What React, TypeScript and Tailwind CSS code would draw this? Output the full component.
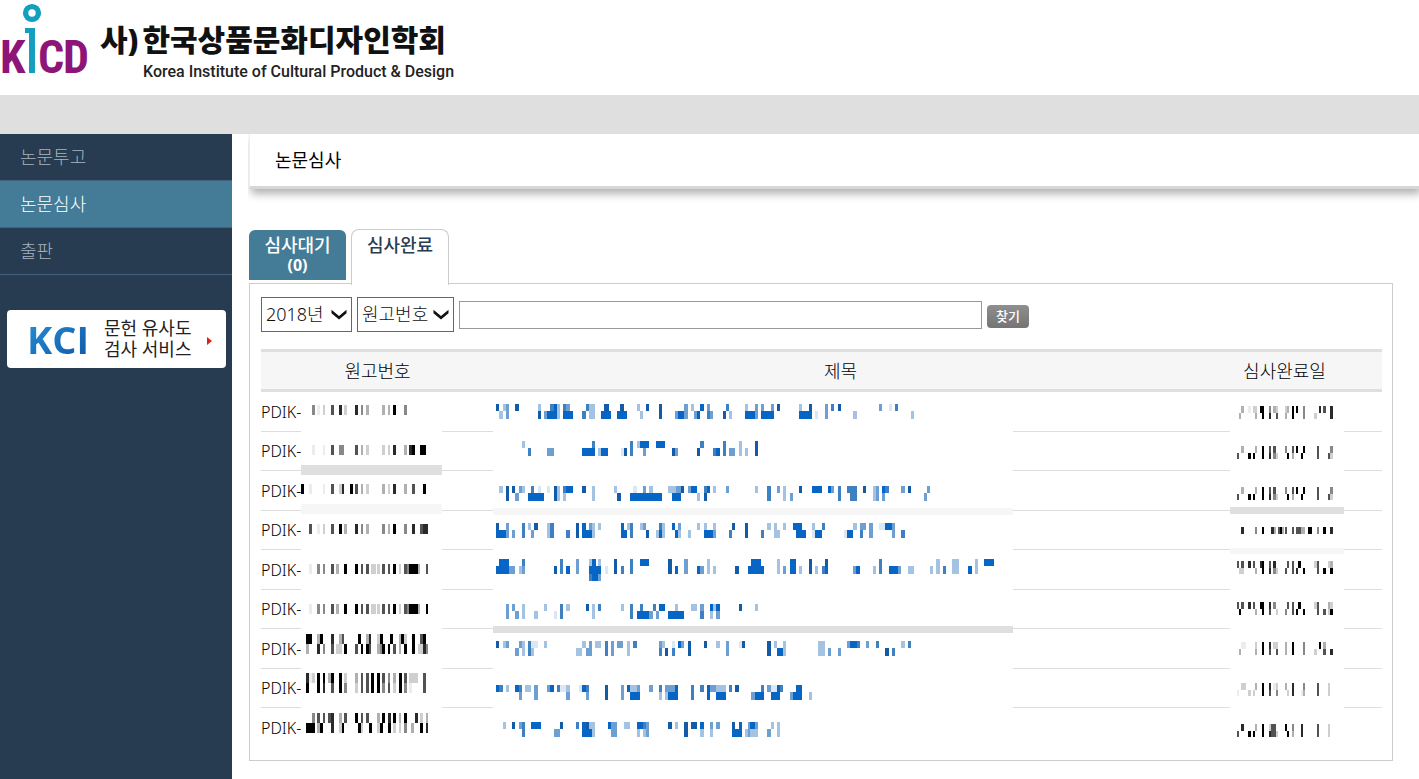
import React, { useState } from "react";

const BLUES: Record<string, string> = {
  a: "#135ba6",
  b: "#0765c6",
  c: "#3f80c0",
  d: "#6d9fd3",
  e: "#a4c2e2",
  f: "#dbe7f3",
};

const GRAYS: Record<string, string> = {
  k: "#000000",
  j: "#2a2a2a",
  h: "#525252",
  g: "#888888",
  m: "#b0b0b0",
  l: "#cfcfcf",
  w: "#ececec",
};

const MENU = ["논문투고", "논문심사", "출판"];

// Mosaic strings: "x.width.tones", one tone letter per line of blocks, "-" leaves the block empty.
// Three units make one pixel.
interface Mosaic {
  y: number;
  blocks: string;
  band?: { y: number; h: number; fill: string };
}

interface Paper {
  number: Mosaic;
  title: Mosaic;
  date: Mosaic;
}

const PAPERS: Paper[] = [
  {
    number: {
      y: 39,
      blocks: "171.9.g 186.9.w 204.6.l 228.9.h 252.9.j 267.9.l 300.9.j 318.6.g 333.9.m 381.9.m 399.6.m 414.9.k 447.9.g",
    },
    title: {
      y: 36,
      blocks:
        "33.9.a- 42.12.-e 54.9.e- 63.9.dd 90.12.a- 159.9.ea 177.9.-d 186.9.-b 195.12.cb 207.9.bb 216.9.ee 234.9.cb 243.12.db 255.9.-b 291.12.-c 303.9.c- 312.18.ee 348.9.-b 357.15.ab 372.6.-b 396.9.-b 405.12.ab 417.9.-b 456.9.e- 465.9.-e 483.9.a- 522.9.aa 570.9.-d 579.18.-b 597.12.dd 618.9.e- 627.9.-d 636.9.-b 645.12.b- 666.9.dc 675.9.-d 714.9.-a 723.9.c- 732.9.-e 780.9.eb 789.6.-b 795.15.-b 810.9.dd 828.9.db 837.21.-b 858.9.db 876.9.a- 942.9.eb 951.21.-b 972.9.ab 990.9.-f 1020.9.dd 1038.9.c- 1059.9.a- 1104.12.-e 1182.9.d- 1212.9.f- 1230.9.c- 1278.9.-e",
    },
    date: {
      y: 42,
      blocks:
        "117.6.-m 123.9.m- 144.9.w- 159.6.l- 165.6.lm 180.6.k- 186.6.kk 207.6.gj 219.9.m- 228.6.lh 255.6.lm 261.6.m- 276.6.kk 288.6.k- 309.6.gg 342.9.-l 357.6.j- 369.9.h- 390.9.jj",
    },
  },
  {
    number: {
      y: 39,
      blocks: "171.9.w 204.6.w 228.9.h 252.15.g 300.9.h 318.6.m 333.9.l 381.9.l 399.6.l 414.9.j 447.9.m 462.9.j 471.9.k 495.18.k",
    },
    title: {
      y: 27,
      blocks:
        "111.9.e- 129.9.-c 186.21.-d 291.30.-b 321.9.cb 339.9.-e 348.21.-b 408.9.-f 417.9.-a 435.9.cc 456.9.e- 465.9.b- 474.9.bd 483.9.b- 513.27.b- 561.9.-a 570.9.-d 636.9.-a 645.12.c- 684.9.-c 693.12.-b 714.9.cc 732.18.-d 762.9.ee 780.9.-e 810.9.aa",
    },
    date: {
      y: 42,
      blocks:
        "111.6.-h 123.9.m- 144.9.-k 159.6.-k 165.6.m- 186.6.kk 207.6.hj 219.9.hg 228.6.-l 255.6.g- 261.6.-k 276.6.hm 288.6.k- 303.6.-k 309.6.k- 351.6.hh 384.6.-h 390.9.gl",
    },
  },
  {
    number: {
      y: 39,
      blocks:
        "138.9.k 162.9.w 204.6.w 228.9.h 252.9.l 261.6.j 285.9.k 300.9.h 318.6.m 333.9.l 381.9.m 399.6.l 414.9.j 447.9.m 471.9.h 504.9.k",
      band: { y: -18, h: 30, fill: "#dfdfdf" },
    },
    title: {
      y: 45,
      blocks:
        "42.12.e- 63.9.aa 81.9.a- 90.12.-d 102.9.d- 111.9.e- 129.9.-b 138.9.cb 147.12.-b 159.9.fb 168.9.-b 186.9.f- 207.9.aa 216.9.ee 234.9.ce 243.21.b- 291.12.a- 321.9.ee 387.9.e- 396.12.-a 435.9.-b 444.12.fb 456.18.-b 474.9.db 483.9.-b 492.12.eb 504.27.-b 549.12.e- 561.12.eb 573.15.db 588.9.a- 609.9.d- 618.18.b- 636.9.-e 657.9.ca 666.9.b- 684.9.e- 723.9.d- 810.9.e- 846.12.cc 876.9.d- 894.9.ee 915.9.-d 942.9.a- 981.30.b- 1029.9.b- 1038.9.d- 1059.9.cc 1086.9.c- 1095.21.cc 1134.9.a- 1164.9.ee 1173.9.dd 1191.9.bd 1200.12.c- 1248.12.d- 1269.9.a- 1317.9.-d 1326.9.d-",
    },
    date: {
      y: 48,
      blocks:
        "111.6.-h 123.9.m- 144.9.-k 159.6.-k 165.6.m- 186.6.kk 207.6.hj 219.9.hg 228.6.-l 255.6.g- 261.6.-k 276.6.hm 288.6.k- 303.6.-k 309.6.k- 351.6.hh 384.6.-h 390.9.gl",
    },
  },
  {
    number: {
      y: 39,
      blocks:
        "162.9.h 186.9.w 204.6.l 228.9.h 252.9.k 267.9.m 300.9.j 318.6.g 333.9.m 381.9.g 399.6.m 414.9.k 447.9.g 471.9.j 495.9.h 504.15.j",
      band: { y: -21, h: 30, fill: "#f6f6f6" },
    },
    title: {
      y: 36,
      blocks:
        "33.9.ab 42.21.-b 63.9.dd 81.9.-d 111.9.cc 129.9.e- 138.9.-d 147.12.a- 186.9.ee 195.12.cc 243.12.-c 273.9.aa 291.12.bb 303.9.-b 312.9.db 321.9.ee 339.9.e- 408.9.bb 417.9.-b 426.9.e- 435.9.cc 465.9.e- 474.9.d- 483.9.-a 513.9.-e 522.9.cb 531.9.ee 561.9.b- 570.9.-b 579.9.de 609.9.-e 636.9.e- 657.9.eb 666.18.-b 684.9.ed 732.9.-c 741.9.a- 780.9.aa 828.9.-c 846.12.e- 867.9.ee 876.9.-e 894.9.e- 924.9.b- 933.18.bb 951.12.-b 981.9.ef 990.21.-b 1011.9.c- 1077.9.-f 1086.18.-b 1104.12.e- 1125.9.dc 1134.9.d- 1152.12.dd 1182.18.f- 1200.21.b- 1221.9.dd 1248.12.-c",
      band: { y: -9, h: 21, fill: "#f6f6f6" },
    },
    date: {
      y: 48,
      blocks:
        "123.9.j 165.6.g 186.6.k 213.9.j 222.6.m 234.6.h 240.6.k 246.6.m 255.6.h 276.6.h 288.15.h 303.12.m 324.12.k 351.6.g 369.9.k 390.9.j",
      band: { y: -12, h: 21, fill: "#dfdfdf" },
    },
  },
  {
    number: {
      y: 42,
      blocks:
        "162.9.w 186.9.g 204.6.g 228.9.h 243.9.m 267.9.k 300.9.k 318.6.h 333.9.h 348.15.l 366.9.l 381.9.h 399.6.h 414.9.k 432.6.l 447.9.h 456.6.g 462.27.k 489.6.m 513.6.h",
    },
    title: {
      y: 27,
      blocks:
        "33.9.-b 42.30.bb 72.18.-d 102.9.-e 111.9.cd 207.9.-a 225.9.cc 243.12.-b 273.9.dd 312.9.ebc 321.12.bbb 333.6.-bb 339.9.ebd 360.9.-f 387.9.aa 408.9.-c 435.9.cc 465.27.b- 549.12.aa 570.9.-b 597.12.dd 636.9.-b 645.12.-d 666.9.ee 684.9.-e 750.12.-a 789.9.-b 798.30.bb 828.9.-b 876.9.ee 894.9.-d 915.18.bb 942.9.-e 972.9.aa 990.9.-e 1011.9.-c 1020.9.ab 1104.9.-d 1113.12.-b 1164.9.-e 1182.9.cc 1212.27.-b 1239.9.-d 1269.18.-e 1335.9.-e 1353.12.ee 1374.9.-c 1401.21.ee 1449.12.-b 1470.9.ee 1497.30.b-",
    },
    date: {
      y: 33,
      blocks:
        "111.6.h- 117.6.-l 123.9.hl 144.9.j- 159.6.h- 165.6.-m 180.6.j- 186.6.kk 207.6.hj 219.9.jg 228.6.-l 255.6.-h 261.6.h- 276.6.hh 288.6.-j 294.9.k- 309.6.-k 342.9.l- 351.6.hh 369.9.-k 384.6.l- 390.9.mk",
      band: { y: -6, h: 18, fill: "#f6f6f6" },
    },
  },
  {
    number: {
      y: 42,
      blocks:
        "162.9.w 186.9.g 204.6.g 228.9.h 243.9.m 267.9.k 300.9.k 318.6.h 333.9.h 348.15.l 366.9.l 381.9.h 399.6.h 414.9.k 432.6.l 447.9.h 456.6.g 462.27.k 489.6.m 513.6.k",
    },
    title: {
      y: 42,
      blocks:
        "63.9.dd 81.9.d- 90.12.-d 111.9.ee 147.12.-e 177.9.e- 207.9.-f 225.9.cc 243.12.e- 303.9.a- 321.9.ee 339.9.c- 408.9.e- 435.9.cc 456.9.-b 465.9.cb 474.18.-b 492.12.-d 504.9.c- 513.9.-d 522.18.b- 549.21.-b 570.9.eb 579.18.-b 618.18.e- 645.12.dc 675.9.be 684.9.e- 693.12.bd 762.9.a- 810.9.e-",
    },
    date: {
      y: 36,
      blocks:
        "111.6.h- 117.6.-k 123.9.h- 144.9.j- 159.6.h- 165.6.-m 180.6.k- 186.6.kk 207.6.jh 219.9.g- 228.6.-l 255.6.-g 261.6.h- 276.6.hh 288.6.-k 294.9.k- 309.6.-k 342.9.l- 351.6.hh 369.9.-h 384.6.ml 390.9.lk",
    },
  },
  {
    number: {
      y: 15,
      blocks:
        "153.9.km 162.9.k- 186.9.mj 195.9.k- 204.6.-g 228.9.jh 243.9.-l 252.9.ml 261.6.h- 267.9.-k 300.9.-h 309.9.k- 318.6.-k 333.9.mk 342.6.jh 366.9.lm 375.9.kg 381.9.-k 399.6.-k 405.9.k- 414.9.-h 432.6.mm 438.9.k- 447.9.lk 471.9.kk 489.6.-l 495.9.hl 504.9.kj 513.6.-g",
    },
    title: {
      y: 36,
      blocks:
        "33.9.a- 54.9.e- 63.9.d- 90.12.-d 102.9.d- 111.9.ee 129.9.cc 138.9.fe 147.12.f- 177.9.e- 273.18.-e 291.12.e- 303.9.-d 312.9.dd 330.18.e- 360.9.cc 378.9.dd 396.18.d- 426.9.ee 444.12.c- 522.9.dc 531.9.e- 540.9.-a 561.9.fc 579.9.b- 588.9.d- 609.9.aa 657.9.a- 693.12.e- 723.9.dd 762.9.f- 771.9.a- 846.12.aa 867.9.e- 876.18.-b 894.9.ee 999.21.ee 1029.9.-d 1059.9.-d 1086.9.d- 1095.21.b- 1116.9.c- 1143.9.d- 1173.9.c- 1200.12.-a 1221.9.-c 1248.12.e- 1269.9.c-",
      band: { y: -9, h: 21, fill: "#dfdfdf" },
    },
    date: {
      y: 39,
      blocks:
        "117.6.-m 123.15.w- 165.6.lm 186.6.kk 207.6.jh 219.9.l- 228.6.lh 255.6.mm 276.6.kk 309.6.gg 342.9.-l 357.6.k- 369.9.mh 390.9.-j",
    },
  },
  {
    number: {
      y: 12,
      blocks:
        "153.9.jk 162.9.w- 171.9.l- 186.9.kk 204.6.kj 219.9.m- 228.9.kh 252.9.kk 267.9.lg 300.9.ml 318.6.hh 333.9.hh 348.9.kk 366.9.kk 381.9.hg 399.6.gh 414.9.ml 432.9.kk 447.9.hg 462.9.lw 471.18.l- 504.9.hh",
    },
    title: {
      y: 48,
      blocks:
        "33.9.b- 42.12.c- 63.9.e- 90.12.b- 102.9.cd 120.18.e- 147.12.dd 186.9.d- 195.12.b- 216.9.c- 225.18.f- 243.12.ed 282.9.f- 291.12.b- 303.9.cd 360.9.aa 408.9.dd 426.9.b- 435.21.eb 456.9.db 492.12.d- 522.9.ce 540.9.de 549.21.db 570.9.bb 618.9.cc 645.12.c- 666.9.bb 675.18.d- 693.30.eb 732.9.c- 750.12.a- 798.12.-d 810.18.-b 828.9.cb 846.12.d- 858.18.fb 876.9.bb 885.9.c- 915.9.-d 924.9.-b 933.18.bb 972.9.-e",
    },
    date: {
      y: 42,
      blocks:
        "111.6.-w 123.15.l- 144.9.-l 159.6.-l 165.6.m- 186.6.kk 207.6.jh 219.9.w- 228.6.lg 255.6.m- 261.6.-l 276.6.jj 303.6.-w 309.6.gm 351.6.hh 384.6.ll",
    },
  },
  {
    number: {
      y: 15,
      blocks:
        "153.27.-k 171.9.g- 186.9.hm 195.9.-k 204.6.h- 219.9.h- 228.9.jj 252.9.ml 261.6.-k 267.9.h- 300.9.k- 309.9.-k 318.6.hl 333.9.h- 342.9.-k 366.9.ml 375.9.-k 381.9.k- 399.9.jk 414.9.kl 432.6.ml 447.9.kg 468.9.-m 480.9.j- 495.9.lk 513.6.mj",
    },
    title: {
      y: 42,
      blocks:
        "54.9.e- 81.9.a- 102.9.d- 111.9.cc 138.30.b- 207.18.-d 225.9.a- 273.9.c- 291.12.bb 303.9.ab 312.9.eb 321.9.ee 369.9.b- 378.18.dd 417.18.e- 456.9.be 465.9.b- 474.9.ce 483.9.dd 549.12.a- 570.9.e- 597.12.aa 618.18.a- 645.12.be 675.9.de 693.12.d- 741.9.ab 750.12.-b 762.9.bb 780.9.-e 789.6.dd 795.15.be 810.9.de 846.12.-d 858.9.e- 876.9.ee",
    },
    date: {
      y: 48,
      blocks:
        "111.6.-h 123.9.j- 144.9.-k 159.6.-k 165.6.m- 186.6.kk 207.6.lj 213.15.hh 228.6.-l 255.6.k- 261.6.-k 276.6.gm 303.6.jj 351.6.hh 384.6.ll",
    },
  },
];

function MosaicStrip({
  data,
  start,
  width,
  lineHeight,
  tones,
  className,
}: {
  data: Mosaic;
  start: number;
  width: number;
  lineHeight: number;
  tones: Record<string, string>;
  className: string;
}) {
  return (
    <svg
      aria-hidden="true"
      className={`absolute top-0 h-10 overflow-visible ${className}`}
      viewBox={`${start} 0 ${width} 120`}
      preserveAspectRatio="xMinYMin"
      shapeRendering="crispEdges"
    >
      <rect x={start} y={0} width={width} height={120} fill="#fff" />
      {data.band && <rect x={start} y={data.band.y} width={width} height={data.band.h} fill={data.band.fill} />}
      {data.blocks.split(" ").map((block) => {
        const [x, w, lines] = block.split(".");
        return lines
          .split("")
          .map((tone, i) =>
            tone === "-" ? null : (
              <rect
                key={`${block}-${i}`}
                x={Number(x)}
                y={data.y + i * lineHeight}
                width={Number(w)}
                height={lineHeight}
                fill={tones[tone]}
              />
            )
          );
      })}
    </svg>
  );
}

function Chevron() {
  return (
    <svg
      aria-hidden="true"
      className="pointer-events-none absolute right-[5px] top-3 h-[11px] w-4"
      viewBox="0 0 16 11"
      fill="#111"
    >
      <path d="M0.5 0.8 V4.2 L8 10.6 L15.5 4.2 V0.8 L8 7 Z" />
    </svg>
  );
}

function Header() {
  return (
    <header>
      <a href="#" className="flex h-[95px] items-start">
        <svg className="h-[95px] w-[100px] shrink-0" viewBox="0 0 100 95" role="img" aria-label="KICD">
          <g
            fill="#8e1578"
            fontFamily="'Liberation Sans Narrow', 'Roboto Condensed', 'Liberation Sans', sans-serif"
            fontWeight="700"
            fontSize="46"
          >
            <text x="0" y="73">K</text>
            <text x="38" y="73">C</text>
            <text x="63" y="73">D</text>
          </g>
          <circle cx="32" cy="13" r="6.4" fill="none" stroke="#139fbd" strokeWidth="5.4" />
          <rect x="25" y="28" width="10" height="5" fill="#139fbd" />
          <rect x="29" y="28" width="6" height="45" fill="#139fbd" />
        </svg>
        <div className="pt-5">
          <div className="flex gap-1 text-[30px] leading-10 font-black text-[#111]">
            <span>사)</span>
            <span>한국상품문화디자인학회</span>
          </div>
          <p className="pl-[43px] font-['Roboto',sans-serif] text-base leading-6 font-medium text-[#222]">
            Korea Institute of Cultural Product &amp; Design
          </p>
        </div>
      </a>
      <div className="h-[39px] bg-[#dfdfdf]" />
    </header>
  );
}

function Sidebar() {
  return (
    <aside className="w-[232px] shrink-0 bg-[#273c51]">
      <nav>
        {MENU.map((item) => (
          <a
            key={item}
            href="#"
            className={`flex h-[47px] items-center border-b border-[#44607a] pl-5 text-[18px] font-light ${
              item === "논문심사" ? "bg-[#447c98] text-white" : "text-[#a9b3bc]"
            }`}
          >
            {item}
          </a>
        ))}
      </nav>
      <a href="#" className="mt-[35px] mr-[6px] ml-[7px] flex h-[58px] items-center rounded-sm bg-white pl-5">
        <span className="w-[77px] bg-gradient-to-br from-[#2a94dc] to-[#0c4c9c] bg-clip-text font-['Open_Sans',sans-serif] text-[38px] leading-[58px] font-bold text-transparent">
          KCI
        </span>
        <span className="flex flex-col text-[18px] leading-[21px] text-[#222]">
          <span>문헌 유사도</span>
          <span>검사 서비스</span>
        </span>
        <svg aria-hidden="true" className="mt-1 ml-4 h-2 w-[5px]" viewBox="0 0 5 8">
          <path d="M0 0 L5 4 L0 8 Z" fill="#e0201b" />
        </svg>
      </a>
    </aside>
  );
}

export default function App() {
  const [keyword, setKeyword] = useState("");

  return (
    <div className="flex min-h-screen flex-col bg-white font-['Noto_Sans','Noto_Sans_CJK_KR',sans-serif] text-black">
      <Header />
      <div className="flex flex-1">
        <Sidebar />
        <main className="min-w-0 flex-1 pl-[17px]">
          <h1 className="flex h-[55px] items-center border-b-3 border-l border-b-[#d6d6d6] border-l-[#eee] pl-[25px] text-[18px] font-normal shadow-[2px_5px_8px_rgba(0,0,0,0.3)] [clip-path:inset(0_0_-20px_-1px)]">
            논문심사
          </h1>

          <div className="mr-[26px] pt-10">
            {/* Tabs */}
            <div role="tablist" className="relative flex items-start gap-[5px]">
              <button
                role="tab"
                aria-selected="false"
                className="mt-px flex h-[50px] w-[97px] flex-col items-center rounded-t-md bg-[#447c98] pt-[5px] text-[18px] leading-5 font-medium text-white"
              >
                <span>심사대기</span>
                <span className="text-base leading-5 font-bold">(0)</span>
              </button>
              <button
                role="tab"
                aria-selected="true"
                className="-mb-[2px] flex h-14 w-[98px] justify-center rounded-t-lg border border-b-0 border-[#ccc] bg-white pt-[5px] text-[18px] leading-5 font-medium text-[#273c51]"
              >
                심사완료
              </button>
            </div>

            <section className="border border-[#ccc] pt-[13px] pr-[10px] pb-3 pl-[11px]">
              <form className="flex items-center gap-[5px]" onSubmit={(e) => e.preventDefault()}>
                <div className="relative">
                  <select
                    aria-label="년도"
                    className="h-[35px] w-[91px] appearance-none border border-[#666] bg-white pl-1 text-[18px] font-light text-[#111]"
                  >
                    <option>2018년</option>
                  </select>
                  <Chevron />
                </div>
                <div className="relative">
                  <select
                    aria-label="검색 항목"
                    className="h-[35px] w-[97px] appearance-none border border-[#666] bg-white pl-1 text-[18px] font-light text-[#111]"
                  >
                    <option>원고번호</option>
                  </select>
                  <Chevron />
                </div>
                <input
                  type="text"
                  aria-label="검색어"
                  value={keyword}
                  onChange={(e) => setKeyword(e.target.value)}
                  className="h-7 w-[523px] border border-[#999] px-2 text-base"
                />
                <button
                  type="submit"
                  className="mt-1 h-[23px] w-[42px] rounded-sm bg-gradient-to-b from-[#8f8f8f] to-[#747474] text-[13px] leading-[23px] font-medium text-white"
                >
                  찾기
                </button>
              </form>

              <table className="mt-[17px] w-full table-fixed border-separate border-spacing-0">
                <colgroup>
                  <col className="w-[233px]" />
                  <col />
                  <col className="w-[195px]" />
                </colgroup>
                <thead>
                  <tr className="h-[43px] bg-[#f6f6f6] text-[18px]">
                    <th className="border-y-3 border-[#dfdfdf] p-0 pt-px font-light">원고번호</th>
                    <th className="border-y-3 border-[#dfdfdf] p-0 pt-px font-light">제목</th>
                    <th className="border-y-3 border-[#dfdfdf] p-0 pt-px font-light">심사완료일</th>
                  </tr>
                </thead>
                <tbody className="[&>tr:last-child>td]:border-b-0">
                  {PAPERS.map((paper, i) => (
                    <tr key={i} className="odd:h-10 even:h-[39px]">
                      <td className="relative border-b border-[#dedede] p-0 text-base font-light">
                        PDIK-
                        <MosaicStrip
                          data={paper.number}
                          start={138}
                          width={423}
                          lineHeight={30}
                          tones={GRAYS}
                          className="left-10 w-[141px]"
                        />
                      </td>
                      <td className="relative border-b border-[#dedede] p-0">
                        <MosaicStrip
                          data={paper.title}
                          start={24}
                          width={1560}
                          lineHeight={22}
                          tones={BLUES}
                          className="-left-px w-[520px]"
                        />
                      </td>
                      <td className="relative border-b border-[#dedede] p-0">
                        <MosaicStrip
                          data={paper.date}
                          start={90}
                          width={342}
                          lineHeight={20}
                          tones={GRAYS}
                          className="left-[43px] w-[114px]"
                        />
                      </td>
                    </tr>
                  ))}
                </tbody>
              </table>
            </section>
          </div>
        </main>
      </div>
    </div>
  );
}
